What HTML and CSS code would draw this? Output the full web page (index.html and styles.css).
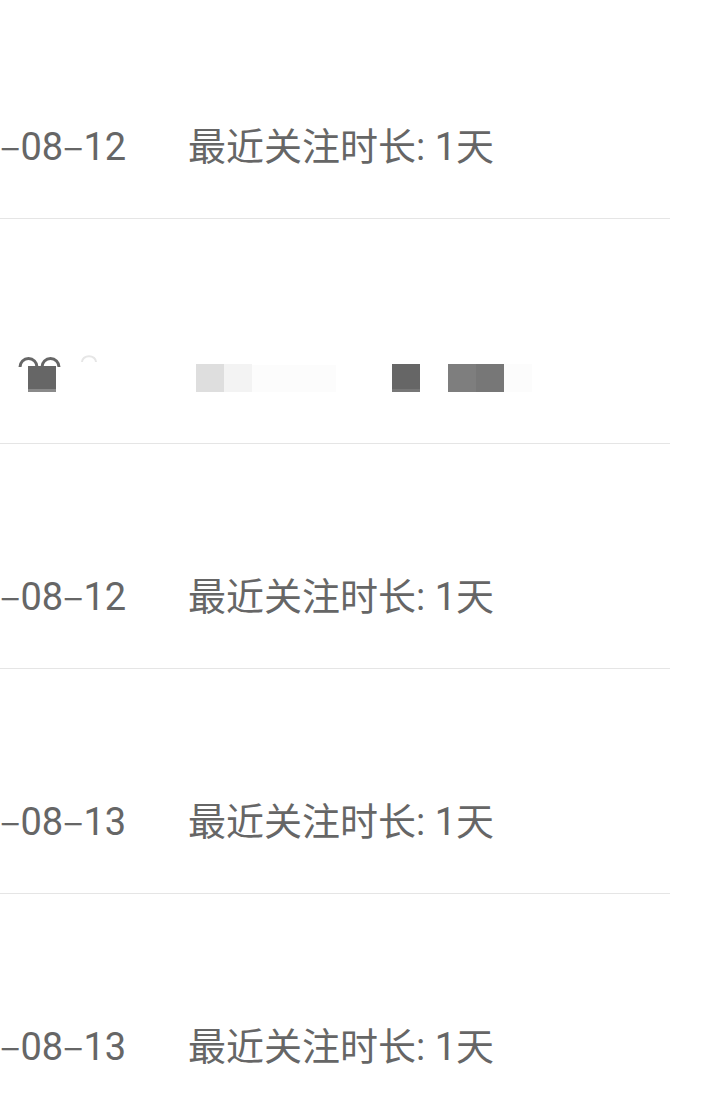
FILE: index.html
```html
<!DOCTYPE html>
<html lang="zh-CN">
<head>
<meta charset="utf-8">
<title>关注列表</title>
<link rel="stylesheet" href="styles.css">
</head>
<body>
<div class="list">
  <div class="row">
    <span class="date"><span class="dash">–</span>08<span class="dash">–</span>12</span>
    <span class="dur">最近关注时长: 1天</span>
  </div>
  <div class="row">
    <svg class="mosaic" width="540" height="50" viewBox="0 0 540 50" aria-hidden="true">
      <path d="M20 20 A8.5 8.5 0 0 1 37 20" fill="none" stroke="#666" stroke-width="3"/>
      <path d="M42 20 A8.5 8.5 0 0 1 59 20" fill="none" stroke="#666" stroke-width="3"/>
      <path d="M82 15 A6 5 0 0 1 96 15" fill="none" stroke="#e6e6e6" stroke-width="2"/>
      <rect x="28" y="19" width="28" height="26" fill="#666"/>
      <rect x="28" y="42" width="28" height="3" fill="#8a8a8a"/>
      <rect x="196" y="17" width="28" height="28" fill="#dedede"/>
      <rect x="224" y="17" width="28" height="28" fill="#f3f3f3"/>
      <rect x="252" y="18" width="84" height="27" fill="#fcfcfc"/>
      <rect x="392" y="17" width="28" height="28" fill="#666"/>
      <rect x="392" y="42" width="28" height="3" fill="#777"/>
      <rect x="448" y="17" width="28" height="28" fill="#7e7e7e"/>
      <rect x="476" y="17" width="28" height="28" fill="#777"/>
      <rect x="504" y="17" width="28" height="28" fill="#fcfcfc"/>
    </svg>
  </div>
  <div class="row">
    <span class="date"><span class="dash">–</span>08<span class="dash">–</span>12</span>
    <span class="dur">最近关注时长: 1天</span>
  </div>
  <div class="row">
    <span class="date"><span class="dash">–</span>08<span class="dash">–</span>13</span>
    <span class="dur">最近关注时长: 1天</span>
  </div>
  <div class="row">
    <span class="date"><span class="dash">–</span>08<span class="dash">–</span>13</span>
    <span class="dur">最近关注时长: 1天</span>
  </div>
</div>
</body>
</html>
```
FILE: styles.css
```css
html, body {
  margin: 0;
  padding: 0;
  background: #fff;
  overflow: hidden;
}
body {
  width: 709px;
  height: 1118px;
  font-family: Roboto, "Noto Sans CJK SC", sans-serif;
  color: #666;
}
.list {
  margin-top: -6px;
  width: 670px;
}
.row {
  height: 224px;
  border-bottom: 1px solid #e5e5e5;
  display: flex;
  align-items: flex-end;
}
.row > * {
  margin-bottom: 46px;
}
.date,
.dur {
  font-size: 38px;
  line-height: 50px;
  white-space: nowrap;
}
.date {
  width: 188px;
  flex: none;
}
.dash {
  font-family: "Noto Sans CJK SC", sans-serif;
}
.mosaic {
  display: block;
  flex: none;
}
```
